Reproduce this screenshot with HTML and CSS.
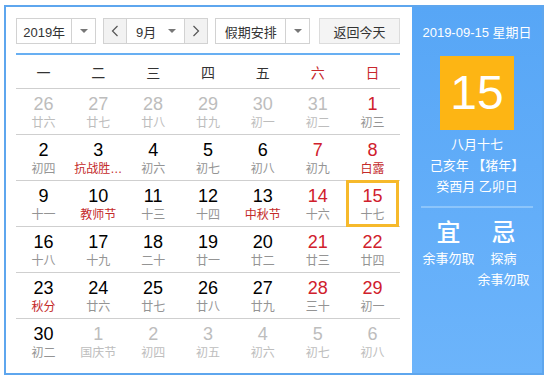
FILE: index.html
```html
<!DOCTYPE html>
<html>
<head>
    <meta charset="utf-8">
    <link rel="stylesheet" href="styles.css">
</head>
<body>
    <div class="calendar">
        <div class="main">
            <div class="toolbar">
                <div class="select year">
                    <span class="select-text">2019年</span>
                    <span class="select-arrow"><i class="caret"></i></span>
                </div>
                <div class="month-group">
                    <span class="nav-btn">
                        <svg width="8" height="12" viewBox="0 0 8 12"><polyline points="6.5,1 1.5,6 6.5,11" fill="none" stroke="#555" stroke-width="1.2"/></svg>
                    </span>
                    <span class="month"><span class="month-text">9月</span><i class="caret"></i></span>
                    <span class="nav-btn">
                        <svg width="8" height="12" viewBox="0 0 8 12"><polyline points="1.5,1 6.5,6 1.5,11" fill="none" stroke="#555" stroke-width="1.2"/></svg>
                    </span>
                </div>
                <div class="select holiday">
                    <span class="select-text">假期安排</span>
                    <span class="select-arrow"><i class="caret"></i></span>
                </div>
                <div class="today-btn">返回今天</div>
            </div>

            <div class="weekdays">
                <span>一</span><span>二</span><span>三</span><span>四</span><span>五</span><span class="weekend">六</span><span class="weekend">日</span>
            </div>

            <div class="week">
                <div class="day other"><b>26</b><small>廿六</small></div>
                <div class="day other"><b>27</b><small>廿七</small></div>
                <div class="day other"><b>28</b><small>廿八</small></div>
                <div class="day other"><b>29</b><small>廿九</small></div>
                <div class="day other"><b>30</b><small>初一</small></div>
                <div class="day other"><b>31</b><small>初二</small></div>
                <div class="day weekend"><b>1</b><small>初三</small></div>
            </div>
            <div class="week">
                <div class="day"><b>2</b><small>初四</small></div>
                <div class="day"><b>3</b><small class="fest">抗战胜…</small></div>
                <div class="day"><b>4</b><small>初六</small></div>
                <div class="day"><b>5</b><small>初七</small></div>
                <div class="day"><b>6</b><small>初八</small></div>
                <div class="day weekend"><b>7</b><small>初九</small></div>
                <div class="day weekend"><b>8</b><small class="fest">白露</small></div>
            </div>
            <div class="week">
                <div class="day"><b>9</b><small>十一</small></div>
                <div class="day"><b>10</b><small class="fest">教师节</small></div>
                <div class="day"><b>11</b><small>十三</small></div>
                <div class="day"><b>12</b><small>十四</small></div>
                <div class="day"><b>13</b><small class="fest">中秋节</small></div>
                <div class="day weekend"><b>14</b><small>十六</small></div>
                <div class="day weekend today"><b>15</b><small>十七</small></div>
            </div>
            <div class="week">
                <div class="day"><b>16</b><small>十八</small></div>
                <div class="day"><b>17</b><small>十九</small></div>
                <div class="day"><b>18</b><small>二十</small></div>
                <div class="day"><b>19</b><small>廿一</small></div>
                <div class="day"><b>20</b><small>廿二</small></div>
                <div class="day weekend"><b>21</b><small>廿三</small></div>
                <div class="day weekend"><b>22</b><small>廿四</small></div>
            </div>
            <div class="week">
                <div class="day"><b>23</b><small class="fest">秋分</small></div>
                <div class="day"><b>24</b><small>廿六</small></div>
                <div class="day"><b>25</b><small>廿七</small></div>
                <div class="day"><b>26</b><small>廿八</small></div>
                <div class="day"><b>27</b><small>廿九</small></div>
                <div class="day weekend"><b>28</b><small>三十</small></div>
                <div class="day weekend"><b>29</b><small>初一</small></div>
            </div>
            <div class="week">
                <div class="day"><b>30</b><small>初二</small></div>
                <div class="day other"><b>1</b><small>国庆节</small></div>
                <div class="day other"><b>2</b><small>初四</small></div>
                <div class="day other"><b>3</b><small>初五</small></div>
                <div class="day other"><b>4</b><small>初六</small></div>
                <div class="day other"><b>5</b><small>初七</small></div>
                <div class="day other"><b>6</b><small>初八</small></div>
            </div>
        </div>

        <div class="side">
            <div class="side-date">2019-09-15 星期日</div>
            <div class="big-day">15</div>
            <div class="lunar">
                <p>八月十七</p>
                <p>己亥年 【猪年】</p>
                <p>癸酉月 乙卯日</p>
            </div>
            <div class="divider"></div>
            <div class="yiji">
                <div class="yiji-col">
                    <div class="yiji-title">宜</div>
                    <span>余事勿取</span>
                </div>
                <div class="yiji-col">
                    <div class="yiji-title">忌</div>
                    <span>探病</span>
                    <span>余事勿取</span>
                </div>
            </div>
        </div>
    </div>
</body>
</html>
```

FILE: styles.css
```css
* {
    margin: 0;
    padding: 0;
    box-sizing: border-box;
}

body {
    background: #fff;
    font-family: 'Liberation Sans', 'Noto Sans CJK SC', sans-serif;
    color: #000;
}

.calendar {
    display: flex;
    width: 540px;
    height: 370px;
    margin: 5px 0 0 4px;
    border: 2px solid #5ea6ee;
}

/* left part */
.main {
    width: 406px;
    padding: 11px 12px 0 10px;
}

.toolbar {
    display: flex;
    height: 26px;
    font-size: 13px;
    color: #333;
}

.select {
    display: flex;
    border: 1px solid #d2d2d2;
    background: #fff;
}

.select-text {
    display: flex;
    align-items: center;
    justify-content: center;
}

.select-arrow {
    display: flex;
    align-items: center;
    justify-content: center;
    width: 24px;
    border-left: 1px solid #d2d2d2;
}

.caret {
    width: 0;
    height: 0;
    border-left: 4px solid transparent;
    border-right: 4px solid transparent;
    border-top: 4px solid #777;
}

.year {
    width: 80px;
}

.year .select-text {
    width: 55px;
}

.month-group {
    display: flex;
    width: 105px;
    margin-left: 7px;
    border: 1px solid #d2d2d2;
}

.nav-btn {
    display: flex;
    align-items: center;
    justify-content: center;
    width: 22px;
    background: #f2f2f2;
}

.month {
    display: flex;
    align-items: center;
    flex: 1;
    padding: 0 8px 0 9px;
    border-left: 1px solid #d2d2d2;
    border-right: 1px solid #d2d2d2;
}

.month-text {
    flex: 1;
}

.holiday {
    width: 95px;
    margin-left: 7px;
}

.holiday .select-text {
    width: 71px;
}

.today-btn {
    display: flex;
    align-items: center;
    justify-content: center;
    width: 81px;
    margin-left: 9px;
    border: 1px solid #dcdcdc;
    background: #f4f4f4;
}

.weekdays {
    display: grid;
    grid-template-columns: repeat(7, 1fr);
    margin-top: 9px;
    height: 35px;
    border-top: 2px solid #68aff2;
    font-size: 14px;
    color: #333;
}

.weekdays span {
    display: flex;
    align-items: center;
    justify-content: center;
}

.weekdays .weekend {
    color: #c8282d;
}

.week {
    display: grid;
    grid-template-columns: repeat(7, 1fr);
    height: 46px;
    border-top: 1px solid #cfcfcf;
}

.day {
    display: flex;
    flex-direction: column;
    align-items: center;
    padding-top: 5px;
}

.day b {
    font-weight: normal;
    font-size: 18px;
    line-height: 20px;
}

.day small {
    font-size: 12px;
    line-height: 18px;
    color: #949494;
    white-space: nowrap;
}

.day.weekend b {
    color: #d0202c;
}

.day small.fest {
    color: #c42a2a;
}

.day.other b {
    color: #bdbdbd;
}

.day.other small {
    color: #bdbdbd;
}

.day.today {
    margin: -1px 1px 0 1px;
    padding-top: 3px;
    border: 3px solid #f6b92b;
}

/* right part */
.side {
    width: 130px;
    background: linear-gradient(#57a6f6, #6cb4fb);
    color: #fff;
    text-align: center;
    padding: 0 9px;
}

.side-date {
    margin-top: 18px;
    font-size: 13px;
    line-height: 16px;
}

.big-day {
    width: 74px;
    height: 74px;
    margin: 15px auto 0;
    background: #fdb514;
    font-size: 48px;
    line-height: 74px;
}

.lunar {
    margin-top: 4px;
    font-size: 13px;
    line-height: 21px;
}

.divider {
    height: 2px;
    margin-top: 9px;
    background: #8cc5fb;
}

.yiji {
    display: flex;
    margin-top: 10px;
}

.yiji-col {
    display: flex;
    flex-direction: column;
    align-items: center;
    width: 55px;
    font-size: 13px;
    line-height: 21px;
}

.yiji-title {
    font-size: 24px;
    font-weight: 500;
    line-height: 30px;
}
```
